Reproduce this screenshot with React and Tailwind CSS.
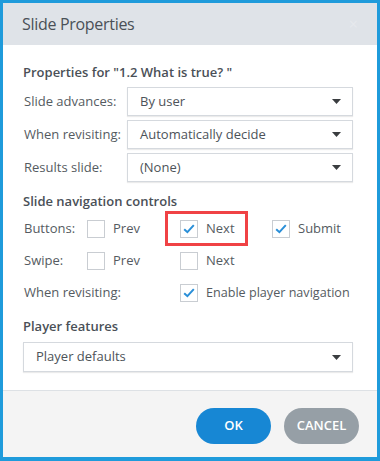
import React from "react";

const font = { fontFamily: '"Open Sans", "Noto Sans", Arial, sans-serif' };

function Select({ value, className = "" }) {
  return (
    <div
      className={`flex h-[29px] items-center justify-between border border-[#d5d9de] bg-white pl-[12px] pr-[11px] text-[13px] text-[#4d5359] shadow-[0_1px_1px_rgba(0,0,0,0.08)] ${className}`}
    >
      <span>{value}</span>
      <svg width="9" height="5" viewBox="0 0 9 5">
        <path d="M0 0h9L4.5 5z" fill="#3a3d40" />
      </svg>
    </div>
  );
}

function Check({ checked, label }) {
  return (
    <div className="flex h-[18px] items-center gap-[8px]">
      <div className="flex h-[18px] w-[18px] items-center justify-center border border-[#c9cdd2] bg-white">
        {checked && (
          <svg width="12" height="10" viewBox="0 0 12 10">
            <path d="M1.2 5.2l3.2 3 6.4-7" fill="none" stroke="#2a8fd8" strokeWidth="2" />
          </svg>
        )}
      </div>
      <span>{label}</span>
    </div>
  );
}

export default function App() {
  return (
    <div
      className="flex h-[461px] w-[380px] flex-col border-[3px] border-b-[4px] border-[#1f9bdb] bg-white text-[#555b61]"
      style={font}
    >
      {/* Header */}
      <div className="flex h-[42px] shrink-0 items-center justify-between bg-[#dfe3e8] pl-[19px] pr-[19px]">
        <span className="text-[16px] tracking-[-0.3px] text-[#4a5057]">Slide Properties</span>
        <span className="text-[16px] leading-none text-[#e6e9ed]">×</span>
      </div>

      {/* Body */}
      <div className="flex-1 px-[20px] pt-[17px] text-[13px]">
        <div className="h-[20px] font-semibold leading-[20px] text-[#4a5057]">
          Properties for "1.2 What is true? "
        </div>

        <div className="mt-[5px] flex flex-col gap-[4px]">
          <div className="flex items-center">
            <span className="w-[104px] pl-[1px]">Slide advances:</span>
            <Select value="By user" className="w-[226px]" />
          </div>
          <div className="flex items-center">
            <span className="w-[104px] pl-[1px]">When revisiting:</span>
            <Select value="Automatically decide" className="w-[226px]" />
          </div>
          <div className="flex items-center">
            <span className="w-[104px] pl-[1px]">Results slide:</span>
            <Select value="(None)" className="w-[226px]" />
          </div>
        </div>

        <div className="mt-[9px] h-[20px] font-semibold leading-[20px] text-[#4a5057]">
          Slide navigation controls
        </div>

        <div className="mt-[2px]">
          <div className="grid h-[32px] grid-cols-[64px_93px_92px_1fr] items-center">
            <span className="pl-[1px]">Buttons:</span>
            <Check label="Prev" />
            <div className="relative">
              <Check checked label="Next" />
              <div className="absolute left-[-15px] top-[-9px] h-[35px] w-[83px] border-[3px] border-[#f04245]" />
            </div>
            <Check checked label="Submit" />
          </div>
          <div className="grid h-[32px] grid-cols-[64px_93px_92px_1fr] items-center">
            <span className="pl-[1px]">Swipe:</span>
            <Check label="Prev" />
            <Check label="Next" />
          </div>
          <div className="grid h-[32px] grid-cols-[157px_1fr] items-center">
            <span className="pl-[1px]">When revisiting:</span>
            <div className="text-[12.6px]">
              <Check checked label="Enable player navigation" />
            </div>
          </div>
        </div>

        <div className="mt-[7px] h-[20px] font-semibold leading-[20px] text-[#4a5057]">
          Player features
        </div>
        <Select value="Player defaults" className="mt-[6px] h-[30px] w-[330px]" />
      </div>

      {/* Footer */}
      <div className="flex h-[67px] shrink-0 justify-end gap-[13px] border-t border-[#dde1e5] bg-[#f4f4f4] pr-[18px] pt-[17px]">
        <button className="h-[36px] w-[75px] rounded-full bg-[#1787d4] text-[13px] font-semibold text-white">
          OK
        </button>
        <button className="h-[36px] w-[75px] rounded-full bg-[#969fa6] text-[13px] font-semibold text-white">
          CANCEL
        </button>
      </div>
    </div>
  );
}
